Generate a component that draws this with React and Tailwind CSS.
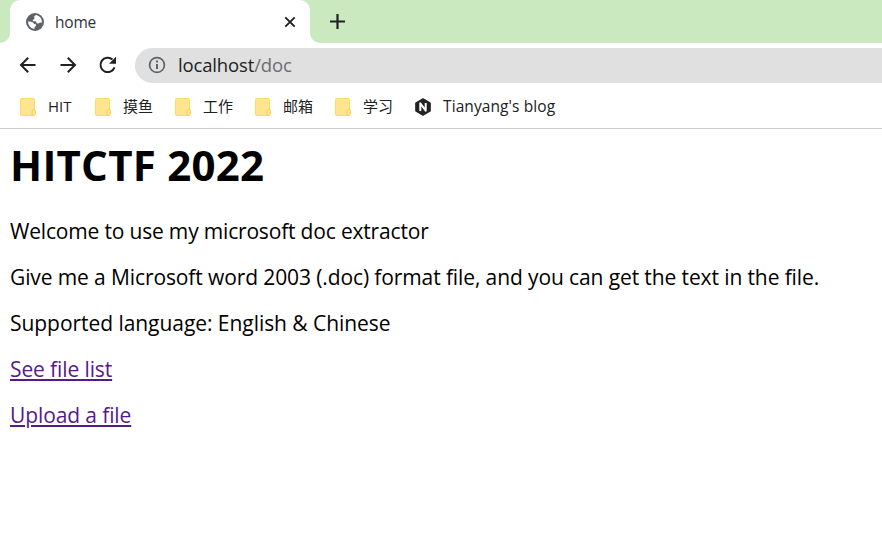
import React from "react";

const FolderIcon = () => (
  <svg className="block h-[20px] w-[18px] shrink-0" viewBox="0 0 18 20">
    <path d="M1.500 1.500h12a1 1 0 0 1 1 1v11l-2 1.500v3.500h-11a1 1 0 0 1-1-1v-15a1 1 0 0 1 1-1z" fill="#ffe590" stroke="#fbdb6b" strokeWidth="1" />
    <path d="M12 18.500v-3.500c0-1.600.8-2.500 1.900-2.500s1.600.8 1.600 1.800v2.400c0 1.100-.8 1.800-1.900 1.800z" fill="#ffe590" stroke="#f8d055" strokeWidth="1" />
  </svg>
);

const GlobeIcon = () => (
  <svg className="block size-[18px] shrink-0" viewBox="0 0 18 18">
    <circle cx="9" cy="9" r="9" fill="#5f6368" />
    <path d="M10.200 2c-1 .4-1.900 1-2 2 0 .9.4 1 .3 1.800-.2.800-1.800.7-1.800 1.600 0 .8 1 .8 2.200.8 1.200 0 1.500.5 1.500 1.300 0 .9 1 1 1.900.9.9-.1 1.200-.7 2-.8.6 0 1.100.2 1.600.3A7 7 0 0 0 10.200 2z" fill="#fff" />
    <path d="M2 8.600c1.500-.1 3.400.1 4.500.7 1.200.7.9 1.600 2.200 1.800 1.100.2 1.500.7 1.400 1.500-.1.900-1.200.8-1.500 1.700-.2.600-.2 1.100-.2 1.600A7 7 0 0 1 2 8.600z" fill="#fff" />
  </svg>
);

const Arrow = ({ flip }) => (
  <svg className={flip ? "block size-5 -scale-x-100" : "block size-5"} viewBox="0 0 20 20" fill="none" stroke="#202124" strokeWidth="2">
    <path d="M17.500 10H3M10.200 2.800 3 10l7.200 7.200" />
  </svg>
);

const ReloadIcon = () => (
  <svg className="block size-5" viewBox="0 0 20 20">
    <path d="M16.500 12.300A7.200 7.200 0 1 1 14.500 4.500" fill="none" stroke="#202124" strokeWidth="2" />
    <path d="M18 1.700v7h-7z" fill="#202124" />
  </svg>
);

const InfoIcon = () => (
  <svg className="block size-[18px] shrink-0" viewBox="0 0 18 18">
    <circle cx="9" cy="9" r="7.400" fill="none" stroke="#5f6368" strokeWidth="1.700" />
    <path d="M9 4.500v2M9 8v5" stroke="#5f6368" strokeWidth="2" />
  </svg>
);

const HexagonIcon = () => (
  <svg className="block h-[18px] w-4 shrink-0" viewBox="0 0 16 18">
    <path d="M8 .8 15.200 4.900v8.200L8 17.200.8 13.100V4.900z" fill="#222" stroke="#222" strokeWidth="1.200" strokeLinejoin="round" />
    <path d="M5.300 13V5.300L10.700 12.700V5" fill="none" stroke="#fff" strokeWidth="2" strokeLinejoin="round" />
  </svg>
);

const folders = ["摸鱼", "工作", "邮箱", "学习"];

export default function App() {
  return (
    <div className="h-[534px] w-[882px] overflow-hidden bg-white font-['Open_Sans','Noto_Sans_CJK_SC',sans-serif] text-black">
      <div className="flex h-[43px]">
        <div className="w-[10px] rounded-br-[10px] bg-[#cbe9be]" />
        <div className="w-[300px] bg-[#cbe9be]">
          <div className="flex h-full items-center rounded-t-[10px] bg-white pr-[14px] pl-4">
            <GlobeIcon />
            <span className="ml-[11px] flex-1 pt-[2px] text-[15.500px] tracking-[-0.2px] text-[#303338]">home</span>
            <svg className="block size-3" viewBox="0 0 12 12" stroke="#202124" strokeWidth="1.900">
              <path d="m1.300 1.300 9.400 9.400M10.700 1.300l-9.400 9.400" />
            </svg>
          </div>
        </div>
        <div className="flex flex-1 items-center rounded-bl-[10px] bg-[#cbe9be] pl-5">
          <svg className="block size-[15px]" viewBox="0 0 15 15" stroke="#202124" strokeWidth="2.200">
            <path d="M7.500 0v15M0 7.500h15" />
          </svg>
        </div>
      </div>

      <div className="flex h-[44px] items-center pl-[18px]">
        <div className="flex gap-5">
          <Arrow />
          <Arrow flip />
          <ReloadIcon />
        </div>
        <div className="ml-[17px] flex h-[35px] flex-1 items-center rounded-l-full bg-[#e0e0e0] pl-[13px]">
          <InfoIcon />
          <span className="ml-3 text-[18.500px] tracking-[-0.15px] text-[#202124]">
            localhost<span className="text-[#6b6e72]">/doc</span>
          </span>
        </div>
      </div>

      <div className="flex h-[42px] items-center border-b border-[#cbcbcb] pb-[2px] pl-5 text-[15px] text-[#202124]">
        <div className="flex w-[75px] items-center gap-[10px]">
          <FolderIcon />
          <span>HIT</span>
        </div>
        {folders.map((name) => (
          <div key={name} className="flex w-20 items-center gap-[10px]">
            <FolderIcon />
            <span>{name}</span>
          </div>
        ))}
        <div className="flex items-center gap-3">
          <HexagonIcon />
          <span className="text-[15.500px] tracking-[0.09px] whitespace-nowrap">Tianyang's blog</span>
        </div>
      </div>

      <main className="pt-[6px] pl-[10px] text-[21px] leading-[46px] tracking-[-0.11px] whitespace-nowrap">
        <h1 className="mb-[13px] text-[42px] leading-[60px] font-bold tracking-[0.25px]">HITCTF 2022</h1>
        <p className="tracking-[-0.18px]">Welcome to use my microsoft doc extractor</p>
        <p>Give me a Microsoft word 2003 (.doc) format file, and you can get the text in the file.</p>
        <p className="tracking-[-0.05px]">Supported language: English &amp; Chinese</p>
        <p><a className="text-[#551a8b] underline decoration-2 underline-offset-2" href="#">See file list</a></p>
        <p><a className="text-[#551a8b] underline decoration-2 underline-offset-2" href="#">Upload a file</a></p>
      </main>
    </div>
  );
}
